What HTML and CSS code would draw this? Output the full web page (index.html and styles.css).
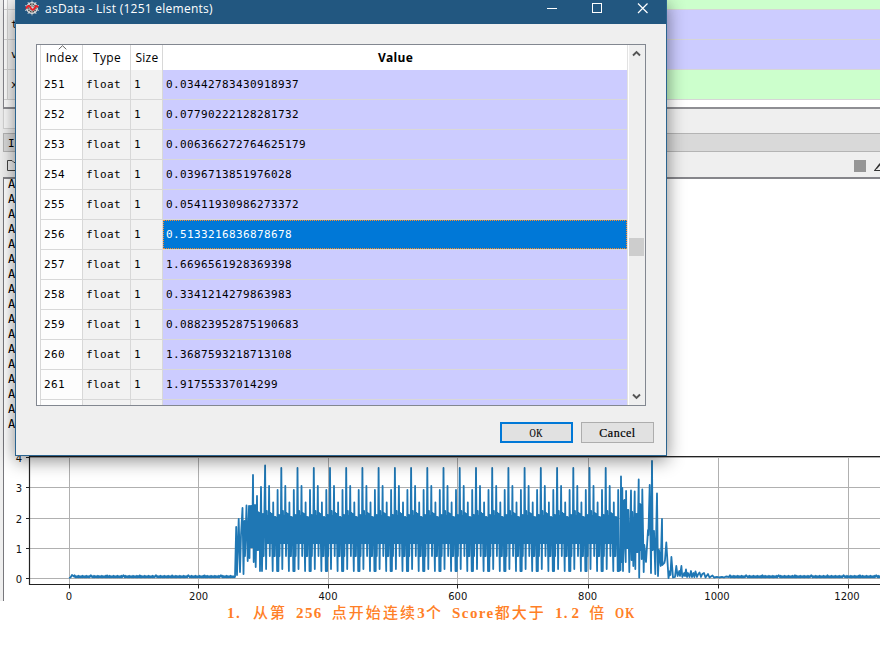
FILE: index.html
```html
<!DOCTYPE html>
<html lang="zh">
<head>
<meta charset="utf-8">
<title>asData</title>
<link rel="stylesheet" href="styles.css">
</head>
<body>
<main class="desktop">
  <section class="workspace">
    <div class="variables">
      <div class="var-row green short"><span class="var-name"></span><span class="var-fill"></span></div>
      <div class="var-row violet"><span class="var-name">t</span><span class="var-fill"></span></div>
      <div class="var-row violet"><span class="var-name">v</span><span class="var-fill"></span></div>
      <div class="var-row green"><span class="var-name">x</span><span class="var-fill"></span></div>
    </div>
    <div class="tabs"></div>
    <div class="console-title">IP</div>
    <div class="toolbar">
      <svg class="folder" width="14" height="14" viewBox="0 0 14 14"><path d="M.5 11.5V1.5h4.5l2 2h6v8z" fill="none" stroke="#444"/></svg>
      <span class="stop"></span>
      <svg class="clear" width="6" height="14" viewBox="0 0 6 14"><path d="M6 3.5L.7 10.5H6M2.5 8.5L6 4.5" fill="none" stroke="#333" stroke-width="1.2"/></svg>
    </div>
    <div class="console">
      <div class="log" id="log"></div>
      <svg class="chart" id="chart" width="876" height="146" viewBox="4 455 876 146"></svg>
    </div>
  </section>
  <p class="note"><span class="lead">1.</span> <span class="han">从第</span> 256 <span class="han">点开始连续</span>3<span class="han">个</span> Score<span class="han">都大于</span> <span>1</span><span class="dot">.</span>2 <span class="han">倍</span> <span class="narrow">OK</span></p>

  <section class="dialog">
    <header class="titlebar">
      <svg class="logo" width="16" height="16" viewBox="0 0 16 16">
        <g fill="none" stroke="#ddd"><circle cx="8" cy="8" r="5.3" fill="#444" stroke-width="1.3"/><circle cx="8" cy="8" r="3" stroke="#aaa" stroke-width=".7"/><path d="M8 .6v14.8M1 5.5l14 5M1 10.5l14-5M3.8 2l8.400 12M12.200 2L3.800 14" stroke-width=".8"/></g>
        <path d="M2 8.700C3.500 5.500 5 5 6.300 7.400S9.500 11 11 7.700s2-1.500 3-.2" fill="none" stroke="#ee1c24" stroke-width="1.800"/>
      </svg>
      <span class="title">asData - List (1251 elements)</span>
      <svg class="controls" width="103" height="12" viewBox="0 0 103 12"><g fill="none" stroke="#fff"><path d="M0 6.5h10"/><rect x="45.5" y="1.5" width="9" height="9"/><path d="M91 1.5l9.5 9.5M100.500 1.500L91 11" stroke-width="1.2"/></g></svg>
    </header>
    <div class="frame">
      <div class="table">
        <div class="row head">
          <span class="index"><svg class="sort" width="9" height="5" viewBox="0 0 9 5"><path d="M.7 4.300L4.500.7l3.800 3.600" fill="none" stroke="#666"/></svg>Index</span><span class="type">Type</span><span class="size">Size</span><span class="value">Value</span>
        </div>
        <div id="rows"></div>
      </div>
      <div class="scroll">
        <svg width="9" height="7" viewBox="0 0 9 7"><path d="M1 5.500L4.500 2 8 5.500" fill="none" stroke="#555" stroke-width="1.900"/></svg>
        <span class="thumb"></span>
        <svg width="9" height="7" viewBox="0 0 9 7"><path d="M1 1.500L4.500 5 8 1.500" fill="none" stroke="#555" stroke-width="1.900"/></svg>
      </div>
    </div>
    <footer class="actions"><button class="btn primary"><span class="ok">OK</span></button><button class="btn">Cancel</button></footer>
  </section>
</main>
<script src="app.js"></script>
</body>
</html>
```
FILE: styles.css
```css
* { box-sizing: border-box; }
body { margin: 0; background: #fff; }
.desktop { position: relative; width: 880px; height: 646px; overflow: hidden; background: #fff; font-family: "DejaVu Sans Mono", monospace; font-size: 11px; color: #000; }

.workspace { height: 601px; padding-left: 3px; background: #efefef; display: flex; flex-direction: column; }
.variables { height: 109px; flex: none; background: #fff; border-left: 1px solid #85858c; border-bottom: 2px solid #8e8e93; }
.var-row { display: flex; height: 30px; border-bottom: 1px solid #d6d6d6; }
.var-row.short { height: 10px; }
.var-name { width: 40px; margin-left: 3px; padding-left: 3px; line-height: 29px; border-left: 1px solid #d6d6d6; background: #f5f5f5; }
.var-fill { flex: 1; }
.green .var-fill { background: #ccffcc; }
.violet .var-fill { background: #ccccff; }
.tabs { height: 24px; flex: none; }
.tabs::before { content: ""; display: block; width: 60px; height: 19px; background: #f9f9f9; border: 1px solid #d4d4d4; border-top: 0; }
.console-title { height: 19px; flex: none; padding-left: 4px; line-height: 19px; background: #d9d9d9; border: 1px solid #b4b4b4; border-right: 0; }
.toolbar { height: 25px; flex: none; display: flex; align-items: center; padding: 4px 0 0 4px; }
.folder { margin-top: -2px; }
.stop { width: 12px; height: 12px; margin: -1px 8px 0 auto; background: #969696; }
.console { flex: 1; display: flex; flex-direction: column; background: #fff; border-left: 1px solid #77777c; border-top: 2px solid #85858a; }
.log { height: 276px; flex: none; padding: 0 0 0 4px; font-size: 12px; line-height: 15px; }
.log div { position: relative; top: -2px; height: 15px; }
.chart { display: block; flex: none; }
.chart text { font: 10px "DejaVu Sans", sans-serif; fill: #111; }

.note { margin: 0 0 0 227px; height: 22px; white-space: pre; color: #ff7f27; font: bold 15px/22px "Liberation Serif", serif; letter-spacing: 1.400px; word-spacing: 3.750px; }
.lead { margin-right: 3px; }
.dot { margin-right: 2.500px; }
.narrow { display: inline-block; transform: scaleX(.78); transform-origin: left; }
.han { font: 500 15px/22px "Noto Sans CJK SC", sans-serif; letter-spacing: 2.100px; }

.dialog { position: absolute; left: 15px; top: 0; width: 652px; height: 456px; background: #efefef; border: 1px solid #2b648f; border-top: 0; box-shadow: 0 4px 17px rgba(0,0,0,.48); }
.titlebar { height: 24px; background: #225780; display: flex; align-items: flex-start; padding: 0 16px 0 8px; color: #fff; }
.title { margin-left: 5px; font: 12px/18px "Open Sans", sans-serif; letter-spacing: .250px; flex: 1; }
.controls { margin-top: 2px; }
.frame { width: 610px; height: 362px; margin: 20px 0 0 20px; border: 1px solid #828790; background: #fff; display: flex; }
.table { width: 591px; flex: none; height: 360px; padding-left: 3px; overflow: hidden; border-right: 1px solid #e2e2e2; }
.row { display: grid; grid-template-columns: 43px 48px 32px 1fr; grid-template-rows: 100%; height: 30px; line-height: 30px; letter-spacing: .380px; }
.row span { border-bottom: 1px solid #d8d8d8; border-right: 1px solid #d8d8d8; padding-left: 3px; white-space: pre; }
.row .index { background: #fdfdfd; border-left: 1px solid #d8d8d8; }
.row .type, .row .size { background: #f2f2f2; }
.row .value { background: #ccccff; border-right: 0; }
.row.selected .value { color: #fff; background: #0078d7; border: 1px dotted #ff8c28; line-height: 28px; padding-left: 2px; height: 29px; }
.row.selected { background: linear-gradient(#d8d8d8, #d8d8d8) bottom / 100% 1px no-repeat; }
.row.head { height: 25px; font: 12px/26px "Open Sans", sans-serif; letter-spacing: .300px; }
.row.head span { position: relative; background: #fff; border-bottom: 0; text-align: center; padding: 0 0 0 1px; }
.row.head .value { font-weight: bold; }
.sort { position: absolute; left: 17px; top: 0; }
.scroll { width: 17px; flex: none; height: 360px; background: #efefef; border-left: 1px solid #fff; display: flex; flex-direction: column; align-items: center; padding: 5px 1px 5px 0; }
.thumb { width: 15px; height: 18px; margin: 181px 0 auto; background: #cdcdcd; }
.actions { display: flex; justify-content: flex-end; gap: 8px; padding: 16px 12px 0 0; }
.btn { width: 73px; height: 21px; padding: 1px 0 0; background: #e1e1e1; border: 1px solid #adadad; color: #000; font: 12px/18px "Liberation Serif", serif; letter-spacing: .500px; -webkit-text-stroke: .2px #000; }
.btn.primary { border: 2px solid #0078d7; line-height: 16px; }
.ok { display: inline-block; transform: scaleX(.72); }
```
FILE: app.js
```javascript
const values = ["0.03442783430918937", "0.07790222128281732", "0.006366272764625179", "0.0396713851976028",
  "0.05411930986273372", "0.5133216836878678", "1.6696561928369398", "0.3341214279863983",
  "0.08823952875190683", "1.3687593218713108", "1.91755337014299", ""];
document.getElementById("rows").innerHTML = values.map((v, i) =>
  `<div class="row${i === 5 ? " selected" : ""}"><span class="index">${v && 251 + i}</span><span class="type">${v && "float"}</span><span class="size">${v && 1}</span><span class="value">${v}</span></div>`).join("");
document.getElementById("log").innerHTML = "<div>A</div>".repeat(17);

const xs = [69, 198.6, 328, 457.8, 587.6, 717, 847];
const ys = [578.5, 548.5, 518.5, 487.5, 457.5];
let out = "";
xs.forEach((x, i) => {
  const c = Math.floor(x + (i > 3 ? 1 : 0)) + 0.5;
  out += `<path d="M${c} 457V584" stroke="#b0b0b0"/><path d="M${c} 585v3.500" stroke="#222"/><text x="${x}" y="600" text-anchor="middle">${i * 200}</text>`;
});
ys.forEach((y, i) => {
  out += `<path d="M30 ${y}H880" stroke="#b0b0b0"/><path d="M26 ${y}h3.500" stroke="#222"/><text x="22" y="${y + 4}" text-anchor="end">${i}</text>`;
});

const pts = [[69, 578], [70.5, 577.5], [72, 575], [74, 576.5]];
const quiet = (from, to) => {
  let i = 0;
  for (let x = from; x < to; x += 0.65, i++) pts.push([x, i % 25 === 0 ? 575.3 : i % 2 ? 577.3 : i % 6 ? 576.3 : 575.8]);
};
quiet(74.6, 234.5);
pts.push([235, 577], [236.2, 527], [237, 575], [238.7, 519], [240, 572], [241, 535], [242.5, 508], [243.5, 574],
  [244.5, 521], [245, 556], [246.5, 505.5], [247.7, 561], [249, 506], [249.5, 558], [250.2, 506], [251, 547], [251.7, 506],
  [252.2, 547], [253, 475], [253.7, 562], [255, 505], [255.7, 567], [257, 496], [257.5, 550], [258, 512], [259, 550], [259.7, 513],
  [260, 571], [261, 487], [262, 571], [263, 514], [263.7, 556]);
for (let p = 0; p <= 21; p++) {
  const b = 265.1 + p * 16.22;
  [[0, p ? 468 : 465.5], [1, 569], [1.7, 511], [2.2, 543], [2.8, 516], [3.4, 543], [4, 486], [4.7, 556], [5.3, 513],
    [6, 543], [6.5, 514], [7.6, 571], [8.1, 502.5], [8.7, 556], [9.2, 517], [9.7, 556], [10.4, 517], [11, 543],
    [11.4, 518], [12, 571], [12.5, 490], [13.3, 571], [13.8, 515], [14.4, 556], [15, 515], [15.6, 543]]
    .forEach(([dx, y]) => pts.push([b + dx, y]));
}
while (pts[pts.length - 1][0] > 619.5) pts.pop();
pts.push([620.5, 570], [621, 476.5], [621.7, 562], [622.3, 488], [623, 571], [623.6, 501], [624, 548], [624.5, 500], [625, 548], [625.7, 562],
  [626.1, 491], [626.6, 548], [627.2, 510], [627.7, 548], [628.3, 510], [629.3, 572], [631, 490.5], [631.6, 560], [632.3, 512], [633.3, 566],
  [634.7, 491.5], [635.3, 569], [636, 514], [636.4, 552], [636.9, 514], [637.5, 552], [638.7, 479.5], [639.2, 577.5], [640, 504], [640.4, 550],
  [641, 505], [641.7, 559], [642.3, 489.5], [643.7, 572], [644.3, 545], [646, 562], [648, 530], [648.4, 535],
  [649.7, 485], [651, 573], [652, 461], [652.7, 550], [654, 531], [655.3, 574], [657, 493.5], [658, 576],
  [659, 550], [660.7, 566], [662, 519], [662.4, 565], [664.3, 563], [665, 560], [666.3, 542.5], [668.5, 578],
  [670, 571], [670.4, 575], [671.4, 557], [673, 577.5], [675, 577], [676.3, 566], [677.6, 576], [679.3, 571],
  [680, 576], [681.4, 566], [682.3, 577], [684.3, 573], [685, 576], [686, 569.5], [687, 577], [688, 573],
  [689.5, 577], [691, 571], [692, 577], [693.5, 573], [694.4, 577], [695.5, 571.5], [697, 577], [698.3, 574],
  [699.5, 572.5], [701, 577], [702.3, 574], [704, 573], [705.5, 577.5], [708, 574], [709.5, 577.5], [712.5, 575.5],
  [714, 577.5], [717, 576.8], [719, 577.5], [722, 576.8], [724, 577.5], [726, 576.5], [729, 577]);
quiet(730, 882);
out += `<path d="M${pts.map(p => p[0].toFixed(1) + " " + p[1]).join("L")}" fill="none" stroke="#1f77b4" stroke-width="1.800" stroke-linejoin="round"/>`;
out += `<path d="M880 456.500H29.500V584.500H880" fill="none" stroke="#222" stroke-width="1.200"/>`;
document.getElementById("chart").innerHTML = out;
```
